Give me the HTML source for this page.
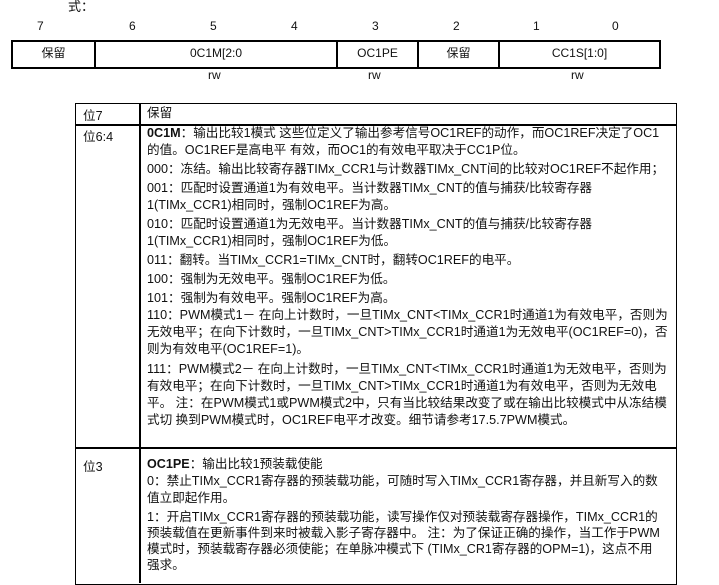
<!DOCTYPE html>
<html><head><meta charset="utf-8"><style>
body{margin:0;width:719px;height:569px;overflow:hidden;background:#fff;font-family:"Liberation Sans","Noto Sans CJK SC",sans-serif;color:#111;position:relative}
.a{position:absolute;white-space:nowrap}
.n{font-family:"Liberation Sans Narrow","Liberation Sans","Noto Sans CJK SC",sans-serif;font-size:12px}
.reg{position:absolute;left:11px;top:40px;width:646px;height:25px;border:2px solid #000}
.reg div{position:absolute;top:0;height:25px;line-height:22px;text-align:center;border-right:2px solid #000}
.t{position:absolute;left:75px;top:103px;width:600px;height:480px;border:1.5px solid #000}
.v{position:absolute;left:139px;top:103px;width:1.5px;height:480px;background:#000}
.h{position:absolute;left:75px;width:602px;height:1.5px;background:#000}
.c{position:absolute;left:147px;font-size:12.6px;line-height:17px;white-space:nowrap}
.l{position:absolute;left:83px;font-size:12.6px;white-space:nowrap}
</style></head><body>
<div class="a" style="left:68px;top:-4px;font-size:13px">式：</div>
<div class="a n" style="left:37px;top:19px">7</div>
<div class="a n" style="left:129px;top:19px">6</div>
<div class="a n" style="left:210px;top:19px">5</div>
<div class="a n" style="left:291px;top:19px">4</div>
<div class="a n" style="left:372px;top:19px">3</div>
<div class="a n" style="left:453px;top:19px">2</div>
<div class="a n" style="left:533px;top:19px">1</div>
<div class="a n" style="left:612px;top:19px">0</div>
<div class="reg n">
<div style="left:0;width:81px">保留</div>
<div style="left:83px;width:240px">0C1M[2:0</div>
<div style="left:325px;width:79px">OC1PE</div>
<div style="left:406px;width:79px">保留</div>
<div style="left:487px;width:159px;border:none">CC1S[1:0]</div>
</div>
<div class="a n" style="left:208px;top:68px">rw</div>
<div class="a n" style="left:368px;top:68px">rw</div>
<div class="a n" style="left:571px;top:68px">rw</div>

<div class="t"></div><div class="v"></div>
<div class="h" style="top:124px"></div>
<div class="h" style="top:447px"></div>
<div class="l" style="top:105px">位7</div>
<div class="c" style="top:105px">保留</div>
<div class="l" style="top:126px">位6:4</div>
<div class="l" style="top:456px">位3</div>

<div class="c" style="top:125px"><b>0C1M</b>：输出比较1模式 这些位定义了输出参考信号OC1REF的动作，而OC1REF决定了OC1<br>的值。OC1REF是高电平 有效，而OC1的有效电平取决于CC1P位。</div>
<div class="c" style="top:161px">000：冻结。输出比较寄存器TIMx_CCR1与计数器TIMx_CNT间的比较对OC1REF不起作用；</div>
<div class="c" style="top:180px">001：匹配时设置通道1为有效电平。当计数器TIMx_CNT的值与捕获/比较寄存器<br>1(TIMx_CCR1)相同时，强制OC1REF为高。</div>
<div class="c" style="top:216px">010：匹配时设置通道1为无效电平。当计数器TIMx_CNT的值与捕获/比较寄存器<br>1(TIMx_CCR1)相同时，强制OC1REF为低。</div>
<div class="c" style="top:252px">011：翻转。当TIMx_CCR1=TIMx_CNT时，翻转OC1REF的电平。</div>
<div class="c" style="top:271px">100：强制为无效电平。强制OC1REF为低。</div>
<div class="c" style="top:290px">101：强制为有效电平。强制OC1REF为高。</div>
<div class="c" style="top:307px">110：PWM模式1－ 在向上计数时，一旦TIMx_CNT&lt;TIMx_CCR1时通道1为有效电平，否则为<br>无效电平；在向下计数时，一旦TIMx_CNT&gt;TIMx_CCR1时通道1为无效电平(OC1REF=0)，否<br>则为有效电平(OC1REF=1)。</div>
<div class="c" style="top:361px">111：PWM模式2－ 在向上计数时，一旦TIMx_CNT&lt;TIMx_CCR1时通道1为无效电平，否则为<br>有效电平；在向下计数时，一旦TIMx_CNT&gt;TIMx_CCR1时通道1为有效电平，否则为无效电<br>平。 注：在PWM模式1或PWM模式2中，只有当比较结果改变了或在输出比较模式中从冻结模<br>式切 换到PWM模式时，OC1REF电平才改变。细节请参考17.5.7PWM模式。</div>

<div class="c" style="top:456px;line-height:17px"><b>OC1PE</b>：输出比较1预装载使能<br>0：禁止TIMx_CCR1寄存器的预装载功能，可随时写入TIMx_CCR1寄存器，并且新写入的数<br>值立即起作用。</div>
<div class="c" style="top:509px;line-height:16px">1：开启TIMx_CCR1寄存器的预装载功能，读写操作仅对预装载寄存器操作，TIMx_CCR1的<br>预装载值在更新事件到来时被载入影子寄存器中。 注：为了保证正确的操作，当工作于PWM<br>模式时，预装载寄存器必须使能；在单脉冲模式下 (TIMx_CR1寄存器的OPM=1)，这点不用<br>强求。</div>
</body></html>
